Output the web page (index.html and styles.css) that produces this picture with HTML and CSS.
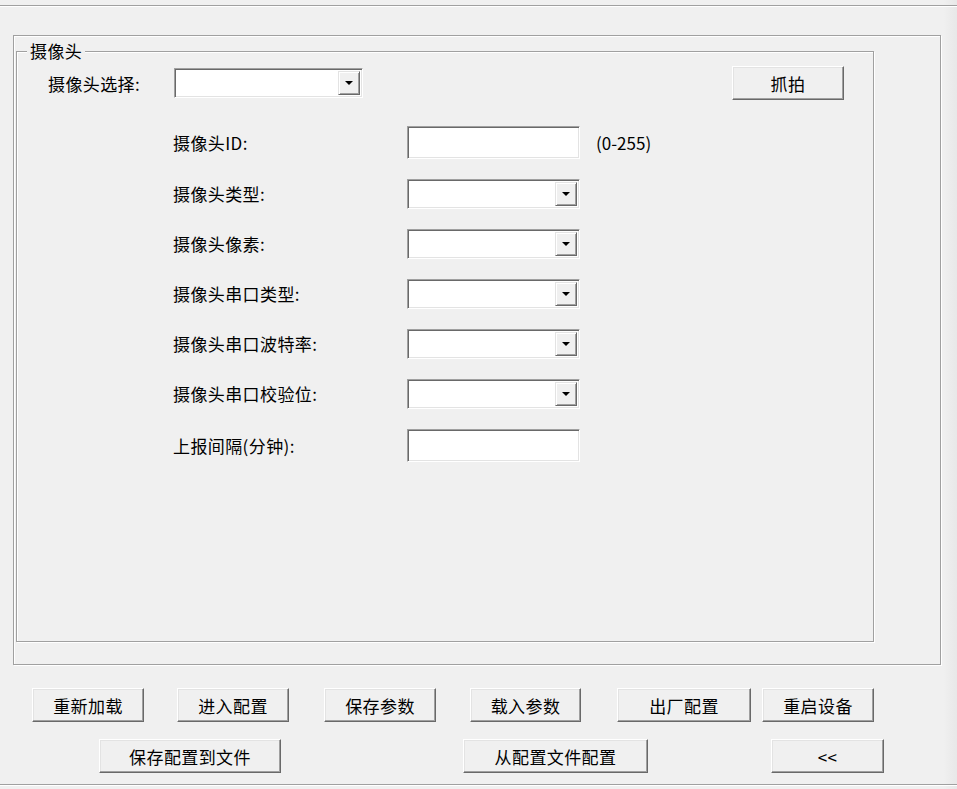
FILE: index.html
```html
<!DOCTYPE html>
<html lang="zh-CN">
<head>
    <meta charset="UTF-8">
    <meta name="viewport" content="width=device-width, initial-scale=1.0">
    <title>摄像头配置</title>
    <link rel="stylesheet" href="styles.css">
</head>
<body>
    <div class="window">
        <div class="topline"></div>

        <div class="outer">
            <fieldset class="group">
                <legend>摄像头</legend>

                <div class="select-row">
                    <label class="select-label">摄像头选择:</label>
                    <div class="combo combo-top"><span class="combo-arrow"></span></div>
                    <button class="btn btn-snap">抓拍</button>
                </div>

                <div class="form">
                    <label>摄像头ID:</label>
                    <div class="edit"></div>
                    <span class="hint">(0-255)</span>

                    <label>摄像头类型:</label>
                    <div class="combo"><span class="combo-arrow"></span></div>
                    <span></span>

                    <label>摄像头像素:</label>
                    <div class="combo"><span class="combo-arrow"></span></div>
                    <span></span>

                    <label>摄像头串口类型:</label>
                    <div class="combo"><span class="combo-arrow"></span></div>
                    <span></span>

                    <label>摄像头串口波特率:</label>
                    <div class="combo"><span class="combo-arrow"></span></div>
                    <span></span>

                    <label>摄像头串口校验位:</label>
                    <div class="combo"><span class="combo-arrow"></span></div>
                    <span></span>

                    <label>上报间隔(分钟):</label>
                    <div class="edit"></div>
                    <span></span>
                </div>
            </fieldset>
        </div>

        <div class="actions">
            <div class="action-row row-one">
                <button class="btn">重新加载</button>
                <button class="btn">进入配置</button>
                <button class="btn">保存参数</button>
                <button class="btn">载入参数</button>
                <button class="btn">出厂配置</button>
                <button class="btn">重启设备</button>
            </div>
            <div class="action-row row-two">
                <button class="btn">保存配置到文件</button>
                <button class="btn">从配置文件配置</button>
                <button class="btn">&lt;&lt;</button>
            </div>
        </div>

        <div class="bottomline"></div>
    </div>
</body>
</html>
```

FILE: styles.css
```css
* {
    box-sizing: border-box;
}
body {
    margin: 0;
    background-color: #f0f0f0;
    font-family: "Noto Sans CJK SC", "Noto Sans", sans-serif;
    font-size: 17px;
    letter-spacing: 0.4px;
    color: #000;
}
.window {
    width: 957px;
    height: 789px;
    overflow: hidden;
    background: linear-gradient(to right, #f0f0f0 944px, #ececec 950px, #e8e8e8 957px);
}
.topline {
    margin-top: 5px;
    border-top: 1px solid #a0a0a0;
    border-bottom: 1px solid #fff;
}
.outer {
    margin: 28px 16px 0 13px;
    padding: 4px 66px 22px 2px;
    border: 1px solid #a0a0a0;
    box-shadow: 1px 1px 0 #fff, inset 1px 1px 0 #fff;
}
.group {
    margin: 0;
    padding: 0 0 179px 0;
    border: 1px solid #a0a0a0;
    box-shadow: 1px 1px 0 #fff, inset 1px 1px 0 #fff;
    min-width: 0;
}
.group legend {
    margin-left: 10px;
    padding: 0 3px;
    line-height: 22px;
    background-color: #f0f0f0;
}

/* top row with camera selector */
.select-row {
    display: flex;
    align-items: center;
    height: 34px;
    margin-top: 4px;
    padding-left: 31px;
}
.select-label {
    width: 126px;
}
.combo-top {
    width: 189px;
    height: 29px;
}
.btn-snap {
    width: 112px;
    height: 33px;
    margin-left: 369px;
}

/* parameter rows */
.form {
    display: grid;
    grid-template-columns: 234px 173px auto;
    grid-template-rows: 33px 30px 30px 30px 30px 30px 33px;
    row-gap: 20px;
    align-items: center;
    margin-top: 26px;
    padding-left: 156px;
}
.form label {
    line-height: 22px;
}
.hint {
    padding-left: 16px;
    letter-spacing: 0;
}

/* sunken edit box */
.edit {
    height: 33px;
    background-color: #fff;
    border: 1px solid;
    border-color: #a0a0a0 #fff #fff #a0a0a0;
    box-shadow: inset 1px 1px 0 #696969, inset -1px -1px 0 #e3e3e3;
}

/* combo box */
.combo {
    display: flex;
    justify-content: flex-end;
    height: 30px;
    padding: 2px;
    background-color: #fff;
    border: 1px solid;
    border-color: #a0a0a0 #fff #fff #a0a0a0;
    box-shadow: inset 1px 1px 0 #696969, inset -1px -1px 0 #e3e3e3;
}
.combo-arrow {
    display: flex;
    align-items: center;
    justify-content: center;
    width: 22px;
    background-color: #f0f0f0;
    border: 1px solid;
    border-color: #e3e3e3 #696969 #696969 #e3e3e3;
    box-shadow: inset 1px 1px 0 #fff, inset -1px -1px 0 #a0a0a0;
}
.combo-arrow::after {
    content: "";
    border-left: 4px solid transparent;
    border-right: 4px solid transparent;
    border-top: 4px solid #000;
}

/* raised push button */
.btn {
    height: 34px;
    padding: 0;
    font: inherit;
    letter-spacing: inherit;
    color: #000;
    background-color: #f0f0f0;
    border: 1px solid;
    border-color: #fff #696969 #696969 #fff;
    box-shadow: inset -1px -1px 0 #a0a0a0, inset 1px 1px 0 #e3e3e3;
    cursor: pointer;
}

/* bottom action buttons */
.actions {
    margin-top: 23px;
}
.action-row {
    display: flex;
    padding-left: 32px;
}
.row-two {
    margin-top: 17px;
}
.row-one .btn { width: 112px; }
.row-one .btn:nth-child(2) { margin-left: 33px; }
.row-one .btn:nth-child(3) { margin-left: 35px; }
.row-one .btn:nth-child(4) { margin-left: 34px; width: 111px; }
.row-one .btn:nth-child(5) { margin-left: 36px; width: 134px; }
.row-one .btn:nth-child(6) { margin-left: 11px; }
.row-two .btn:nth-child(1) { margin-left: 67px; width: 182px; }
.row-two .btn:nth-child(2) { margin-left: 182px; width: 185px; }
.row-two .btn:nth-child(3) { margin-left: 123px; width: 113px; }

.bottomline {
    margin-top: 11px;
    border-top: 1px solid #a0a0a0;
    border-bottom: 1px solid #fff;
}
```
